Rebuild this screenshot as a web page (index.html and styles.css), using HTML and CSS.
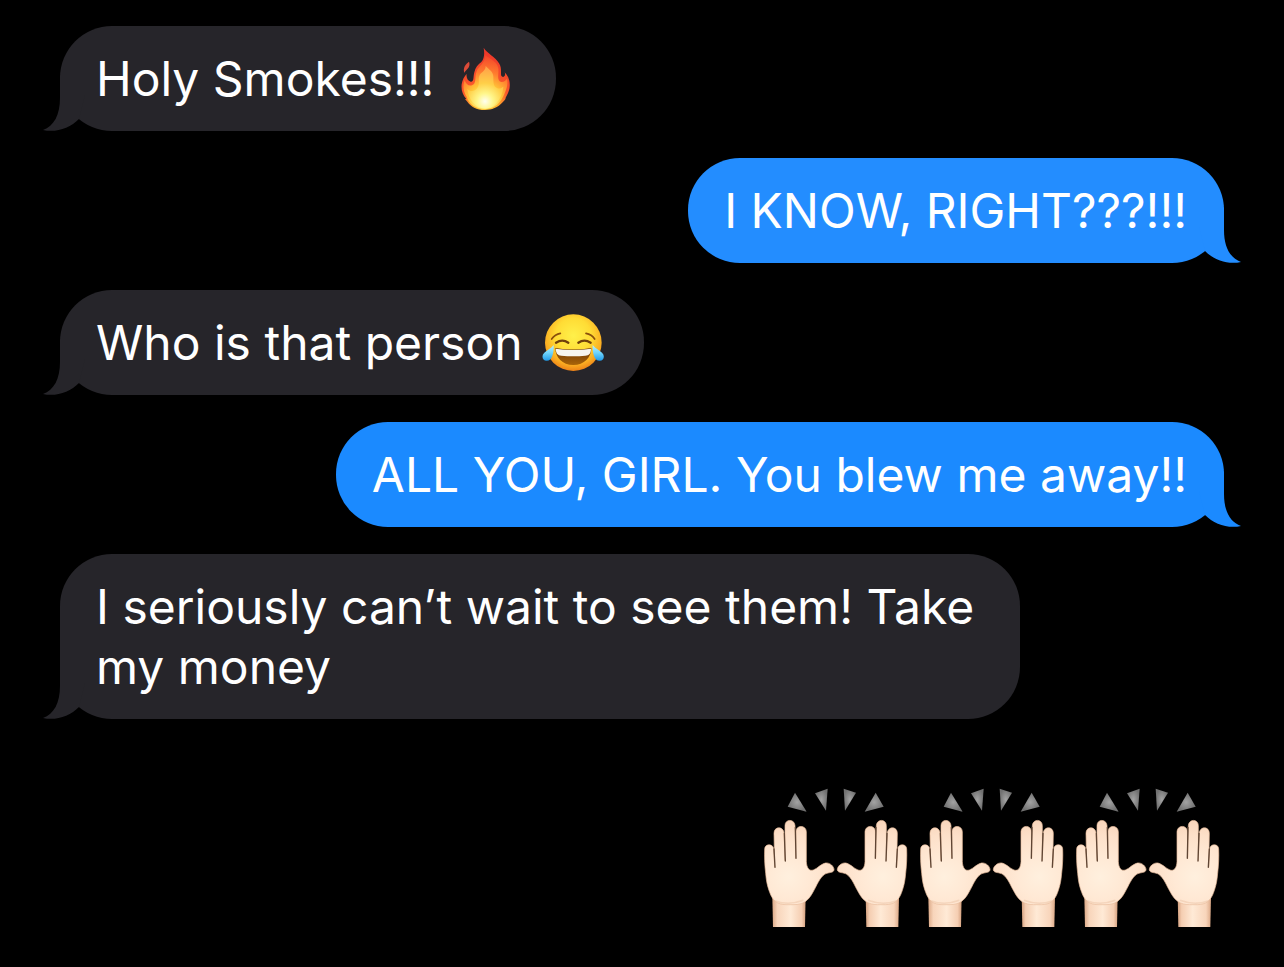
FILE: index.html
```html
<!DOCTYPE html>
<html lang="en">
<head>
<meta charset="utf-8">
<meta name="viewport" content="width=device-width, initial-scale=1">
<title>Messages</title>
<link rel="stylesheet" href="styles.css">
</head>
<body>
<svg class="defs" aria-hidden="true">
  <defs>
    <radialGradient id="flame" gradientUnits="userSpaceOnUse" cx="135" cy="215" r="150">
      <stop offset="0" stop-color="#fffbe0"/><stop offset=".14" stop-color="#fff280"/><stop offset=".34" stop-color="#ffc638"/><stop offset=".6" stop-color="#ff7b2e"/><stop offset="1" stop-color="#f0382a"/>
    </radialGradient>
    <radialGradient id="flame-edge" gradientUnits="userSpaceOnUse" cx="136" cy="220" r="150">
      <stop offset="0" stop-color="#ffdf45"/><stop offset=".25" stop-color="#ffab2b"/><stop offset=".48" stop-color="#f8562b"/><stop offset="1" stop-color="#ee3829"/>
    </radialGradient>
    <radialGradient id="flame-core" gradientUnits="userSpaceOnUse" cx="135" cy="214" r="110">
      <stop offset="0" stop-color="#fffef0"/><stop offset=".22" stop-color="#fff68a"/><stop offset=".5" stop-color="#ffcf48"/><stop offset="1" stop-color="#ff9a48"/>
    </radialGradient>
    <radialGradient id="face" cx=".5" cy=".38" r=".62">
      <stop offset="0" stop-color="#fff04a"/><stop offset=".5" stop-color="#ffdc35"/><stop offset=".82" stop-color="#fbae22"/><stop offset="1" stop-color="#ec8118"/>
    </radialGradient>
    <linearGradient id="tear" x1="0" y1="0" x2="0" y2="1">
      <stop offset="0" stop-color="#b9f0ff"/><stop offset=".5" stop-color="#70d4fb"/><stop offset="1" stop-color="#219be8"/>
    </linearGradient>
    <linearGradient id="mouth" x1="0" y1="0" x2="0" y2="1">
      <stop offset="0" stop-color="#6b3507"/><stop offset="1" stop-color="#a96408"/>
    </linearGradient>
    <radialGradient id="skin" gradientUnits="userSpaceOnUse" cx="115" cy="290" r="180">
      <stop offset="0" stop-color="#fff0de"/><stop offset=".35" stop-color="#ffe9d5"/><stop offset=".7" stop-color="#fde0c9"/><stop offset="1" stop-color="#f7d2b7"/>
    </radialGradient>
    <linearGradient id="wrist" x1="0" y1="0" x2="1" y2="0">
      <stop offset="0" stop-color="#dba886"/><stop offset=".15" stop-color="#f8d5bb"/><stop offset=".55" stop-color="#ffead6"/><stop offset=".88" stop-color="#f5ceb2"/><stop offset="1" stop-color="#d39f7d"/>
    </linearGradient>
    <radialGradient id="ray">
      <stop offset="0" stop-color="#a3a3a3"/><stop offset="1" stop-color="#717171"/>
    </radialGradient>
    <symbol id="tail" viewBox="0 0 42 56">
      <path d="M17 0V23C17 40 11 51 0 55C13 58 27 53 36 44L42 20Z"/>
    </symbol>
    <symbol id="hand" viewBox="39 21 223 423" overflow="visible">
      <path fill="url(#wrist)" d="M67 350L69 441H165L167 345Z"/>
      <path fill="url(#skin)" stroke="#e9bd9d" stroke-width="2" d="M44 207C44 190 70 190 71 207L74 262L72 160C72 138 101 138 102 160L105 242L105 137C105 116 134 116 135 137L137 235L138 155C138 134 168 134 169 155V245C170 264 178 274 190 270C203 265 211 253 226 249C240 247 253 260 252 270C250 280 234 276 224 283C208 294 201 316 188 338C175 362 159 374 132 374H108C82 374 68 362 59 337C51 315 49 302 47 280C44 254 43 230 44 207Z"/>
      <path fill="none" stroke="#5f4534" stroke-width="4" stroke-linecap="round" d="M72 207L75 262M103 160L106 243M136 142L138 235"/>
      <path fill="none" stroke="#ebc3a5" stroke-width="5" opacity=".5" d="M74 362Q115 378 160 361"/>
    </symbol>
    <symbol id="raised-hands" viewBox="39 21 447 423">
      <g fill="url(#ray)">
        <path d="M135 38L170 95L113 80Z"/><path d="M233 26L228 92L195 40Z"/><path d="M281 26L318 38L285 92Z"/><path d="M377 38L401 80L344 95Z"/>
      </g>
      <use href="#hand" x="39" y="21" width="223" height="423"/>
      <g transform="translate(514 0) scale(-1 1)"><use href="#hand" x="39" y="21" width="223" height="423"/></g>
    </symbol>
  </defs>
</svg>

<main class="thread">
  <div class="message received">
    <p class="text">Holy Smokes!!! <svg class="emoji fire" viewBox="54 48 174 192" role="img" aria-label="fire">
      <path fill="#dd4b38" d="M87 95C91 106 86 114 80 119C76 123 74 125 73 129C68 112 77 103 87 95Z"/>
      <path fill="url(#flame-edge)" d="M131 53C140 69 166 80 178 101C187 116 180 133 185 139C192 144 198 137 194 127C204 137 211 152 209 170C208 184 201 194 197 203C197 208 193 211 188 217C174 233 155 240 135 240C109 240 92 229 82 215L75 207L79 207C68 195 63 180 65 163C67 149 73 139 80 131C78 142 83 153 92 155C103 156 99 142 103 127C106 112 114 103 124 96C133 86 134 72 131 53Z"/>
      <path fill="url(#flame)" d="M136 76C152 87 173 98 175 115C177 130 171 145 179 154C187 160 198 151 201 146C206 166 196 184 190 199C175 229 155 237 135 237C108 237 86 222 80 200C71 187 67 169 74 150C77 162 86 169 96 166C111 161 103 141 110 124C116 108 135 101 136 76Z"/>
      <path fill="url(#flame-core)" d="M137 108C147 119 160 125 160 140C160 158 160 169 171 174C179 178 185 173 190 170C187 204 165 235 135 235C105 235 85 207 82 177C92 187 105 184 112 174C122 158 112 149 119 135C126 125 137 122 137 108Z"/>
    </svg></p>
    <svg class="tail" aria-hidden="true"><use href="#tail"/></svg>
  </div>

  <div class="message sent">
    <p class="text">I KNOW, RIGHT???!!!</p>
    <svg class="tail" aria-hidden="true"><use href="#tail"/></svg>
  </div>

  <div class="message received">
    <p class="text">Who is that person <svg class="emoji joy" viewBox="36 36 186 186" role="img" aria-label="face with tears of joy">
      <circle cx="130" cy="128" r="85" fill="url(#face)"/>
      <path fill="none" stroke="#8a4f0c" stroke-width="5" stroke-linecap="round" d="M65 117Q75 103 91 100M168 100Q185 103 194 117"/>
      <path fill="none" stroke="#70400c" stroke-width="7" stroke-linecap="round" d="M78 128Q97 116 115 128M145 128Q163 116 182 128"/>
      <path fill="url(#mouth)" d="M76 144Q130 153 184 144C184 172 163 195 130 195C97 195 76 172 76 144Z"/>
      <path fill="#f7f5ef" d="M77 146Q130 154 183 146C183 161 177 166 166 167Q130 171 94 167C83 166 78 160 77 146Z"/>
      <path fill="url(#tear)" d="M71 135C72 151 69 182 50 182C36 182 34 166 43 158C51 151 62 146 71 135Z"/>
      <path fill="url(#tear)" d="M188 135C187 151 190 182 209 182C223 182 225 166 216 158C208 151 197 146 188 135Z"/>
    </svg></p>
    <svg class="tail" aria-hidden="true"><use href="#tail"/></svg>
  </div>

  <div class="message sent deep">
    <p class="text">ALL YOU, GIRL. You blew me away!!</p>
    <svg class="tail" aria-hidden="true"><use href="#tail"/></svg>
  </div>

  <div class="message received">
    <p class="text">I seriously can’t wait to see them! Take my money</p>
    <svg class="tail" aria-hidden="true"><use href="#tail"/></svg>
  </div>

  <div class="big-emoji" role="img" aria-label="three pairs of raised hands">
    <svg class="hands"><use href="#raised-hands"/></svg>
    <svg class="hands"><use href="#raised-hands"/></svg>
    <svg class="hands"><use href="#raised-hands"/></svg>
  </div>
</main>
</body>
</html>
```
FILE: styles.css
```css
* {
  box-sizing: border-box;
}

body {
  margin: 0;
  background: #000;
  color: #fff;
  font-family: Inter, "Liberation Sans", sans-serif;
  font-size: 48px;
  line-height: 60px;
}

.defs {
  position: absolute;
  width: 0;
  height: 0;
}

.thread {
  display: flex;
  flex-direction: column;
  gap: 27px;
  padding: 26px 60px;
}

.message {
  position: relative;
  max-width: 82.5%;
  padding: 23px 37px 22px 36px;
  border-radius: 52px;
}

.text {
  margin: 0;
}

.received {
  align-self: flex-start;
  background: #26252a;
  fill: #26252a;
}

.sent {
  align-self: flex-end;
  background: #238dff;
  fill: #238dff;
}

.deep {
  background: #1b8aff;
  fill: #1b8aff;
}

.tail {
  position: absolute;
  bottom: 0;
  left: -17px;
  width: 42px;
  height: 56px;
}

.sent .tail {
  right: -17px;
  left: auto;
  transform: scaleX(-1);
}

.emoji {
  display: inline-block;
  height: 64px;
  margin: -8px 3px -8px 10px;
  vertical-align: -6px;
}

.fire {
  width: 58px;
}

.joy {
  width: 62px;
  height: 62px;
  margin-left: 6px;
}

.big-emoji {
  display: flex;
  align-self: flex-end;
  gap: 7px;
  margin-top: 41px;
}

.hands {
  width: 149px;
  height: 141px;
}
```
